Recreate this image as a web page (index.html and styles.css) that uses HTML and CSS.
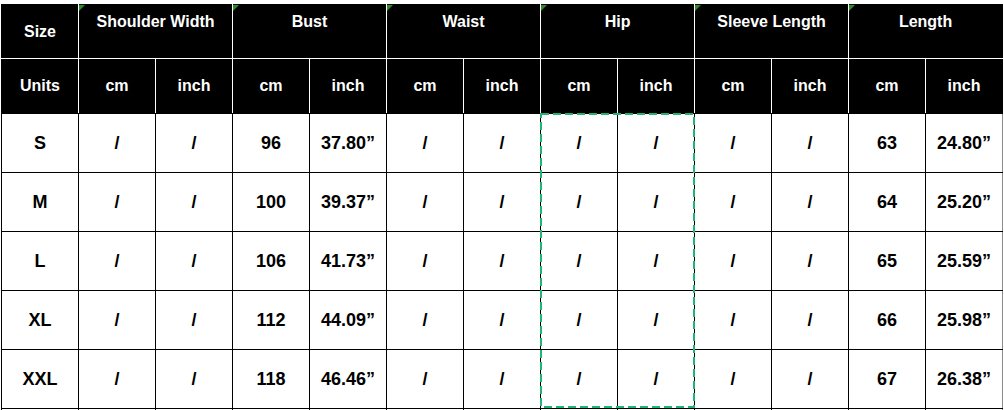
FILE: index.html
```html
<!DOCTYPE html>
<html>
<head>
<meta charset="utf-8">
<link rel="stylesheet" href="styles.css">
</head>
<body>
<div class="sheet">
<table class="size-table">
  <colgroup>
    <col class="c"><col class="c"><col class="c"><col class="c"><col class="c"><col class="c"><col class="c"><col class="c"><col class="c"><col class="c"><col class="c"><col class="c"><col class="c">
  </colgroup>
  <thead>
    <tr class="head1">
      <th class="label">Size</th>
      <th colspan="2" class="group">Shoulder Width</th>
      <th colspan="2" class="group">Bust</th>
      <th colspan="2" class="group">Waist</th>
      <th colspan="2" class="group">Hip</th>
      <th colspan="2" class="group gray-left">Sleeve Length</th>
      <th colspan="2" class="group">Length</th>
    </tr>
    <tr class="head2">
      <th>Units</th>
      <th>cm</th><th>inch</th>
      <th>cm</th><th>inch</th>
      <th>cm</th><th>inch</th>
      <th>cm</th><th>inch</th>
      <th>cm</th><th>inch</th>
      <th>cm</th><th>inch</th>
    </tr>
  </thead>
  <tbody>
    <tr><td>S</td><td>/</td><td>/</td><td>96</td><td>37.80”</td><td>/</td><td>/</td><td>/</td><td>/</td><td>/</td><td>/</td><td>63</td><td>24.80”</td></tr>
    <tr><td>M</td><td>/</td><td>/</td><td>100</td><td>39.37”</td><td>/</td><td>/</td><td>/</td><td>/</td><td>/</td><td>/</td><td>64</td><td>25.20”</td></tr>
    <tr><td>L</td><td>/</td><td>/</td><td>106</td><td>41.73”</td><td>/</td><td>/</td><td>/</td><td>/</td><td>/</td><td>/</td><td>65</td><td>25.59”</td></tr>
    <tr><td>XL</td><td>/</td><td>/</td><td>112</td><td>44.09”</td><td>/</td><td>/</td><td>/</td><td>/</td><td>/</td><td>/</td><td>66</td><td>25.98”</td></tr>
    <tr><td>XXL</td><td>/</td><td>/</td><td>118</td><td>46.46”</td><td>/</td><td>/</td><td>/</td><td>/</td><td>/</td><td>/</td><td>67</td><td>26.38”</td></tr>
    <tr class="extra"><td></td><td></td><td></td><td></td><td></td><td></td><td></td><td></td><td></td><td></td><td></td><td></td><td></td></tr>
  </tbody>
</table>
<div class="marquee">
  <svg class="marquee-svg" width="155" height="295" viewBox="0 0 155 295">
    <rect x="1" y="1" width="153" height="293" fill="none" stroke="#1fb577" stroke-width="2" stroke-dasharray="8 4"/>
  </svg>
</div>
</div>
</body>
</html>
```

FILE: styles.css
```css
html, body {
  margin: 0;
  padding: 0;
  background: #fff;
  overflow: hidden;
  height: 410px;
}
.sheet {
  position: relative;
  padding: 4px 0 0 1px;
}
.size-table {
  border-collapse: collapse;
  table-layout: fixed;
  width: 1002px;
  font-family: "Liberation Sans", Arial, sans-serif;
  font-weight: bold;
}
.size-table col.c {
  width: 77px;
}
.size-table th {
  background: #000;
  color: #fff;
  font-size: 16px;
  border: 1px solid #fff;
  padding: 0;
  text-align: center;
  vertical-align: middle;
}
.size-table thead tr.head1 th {
  border-top-color: #000;
}
.size-table thead tr th:first-child {
  border-left-color: #000;
}
.size-table thead tr th:last-child {
  border-right-color: #000;
}
.size-table tr.head2 th {
  border-bottom-color: #000;
}
.head1 {
  height: 54px;
}
.head2 {
  height: 55px;
}
.head1 th.group {
  vertical-align: top;
  padding-top: 8px;
  position: relative;
}
.head1 th.group::before {
  content: "";
  position: absolute;
  left: 0;
  top: 0;
  width: 0;
  height: 0;
  border-top: 6px solid #2d8a2d;
  border-right: 6px solid transparent;
}
.head1 th.gray-left {
  border-left-color: #9a9a9a;
}
.size-table td {
  border: 1px solid #000;
  color: #000;
  font-size: 18px;
  text-align: center;
  vertical-align: middle;
  padding: 0;
  height: 58px;
}
.size-table td:last-child {
  border-right-color: #8c8c8c;
}
.marquee {
  position: absolute;
  left: 540px;
  top: 113px;
  width: 155px;
  height: 295px;
  pointer-events: none;
}
.marquee-svg {
  display: block;
}
```
